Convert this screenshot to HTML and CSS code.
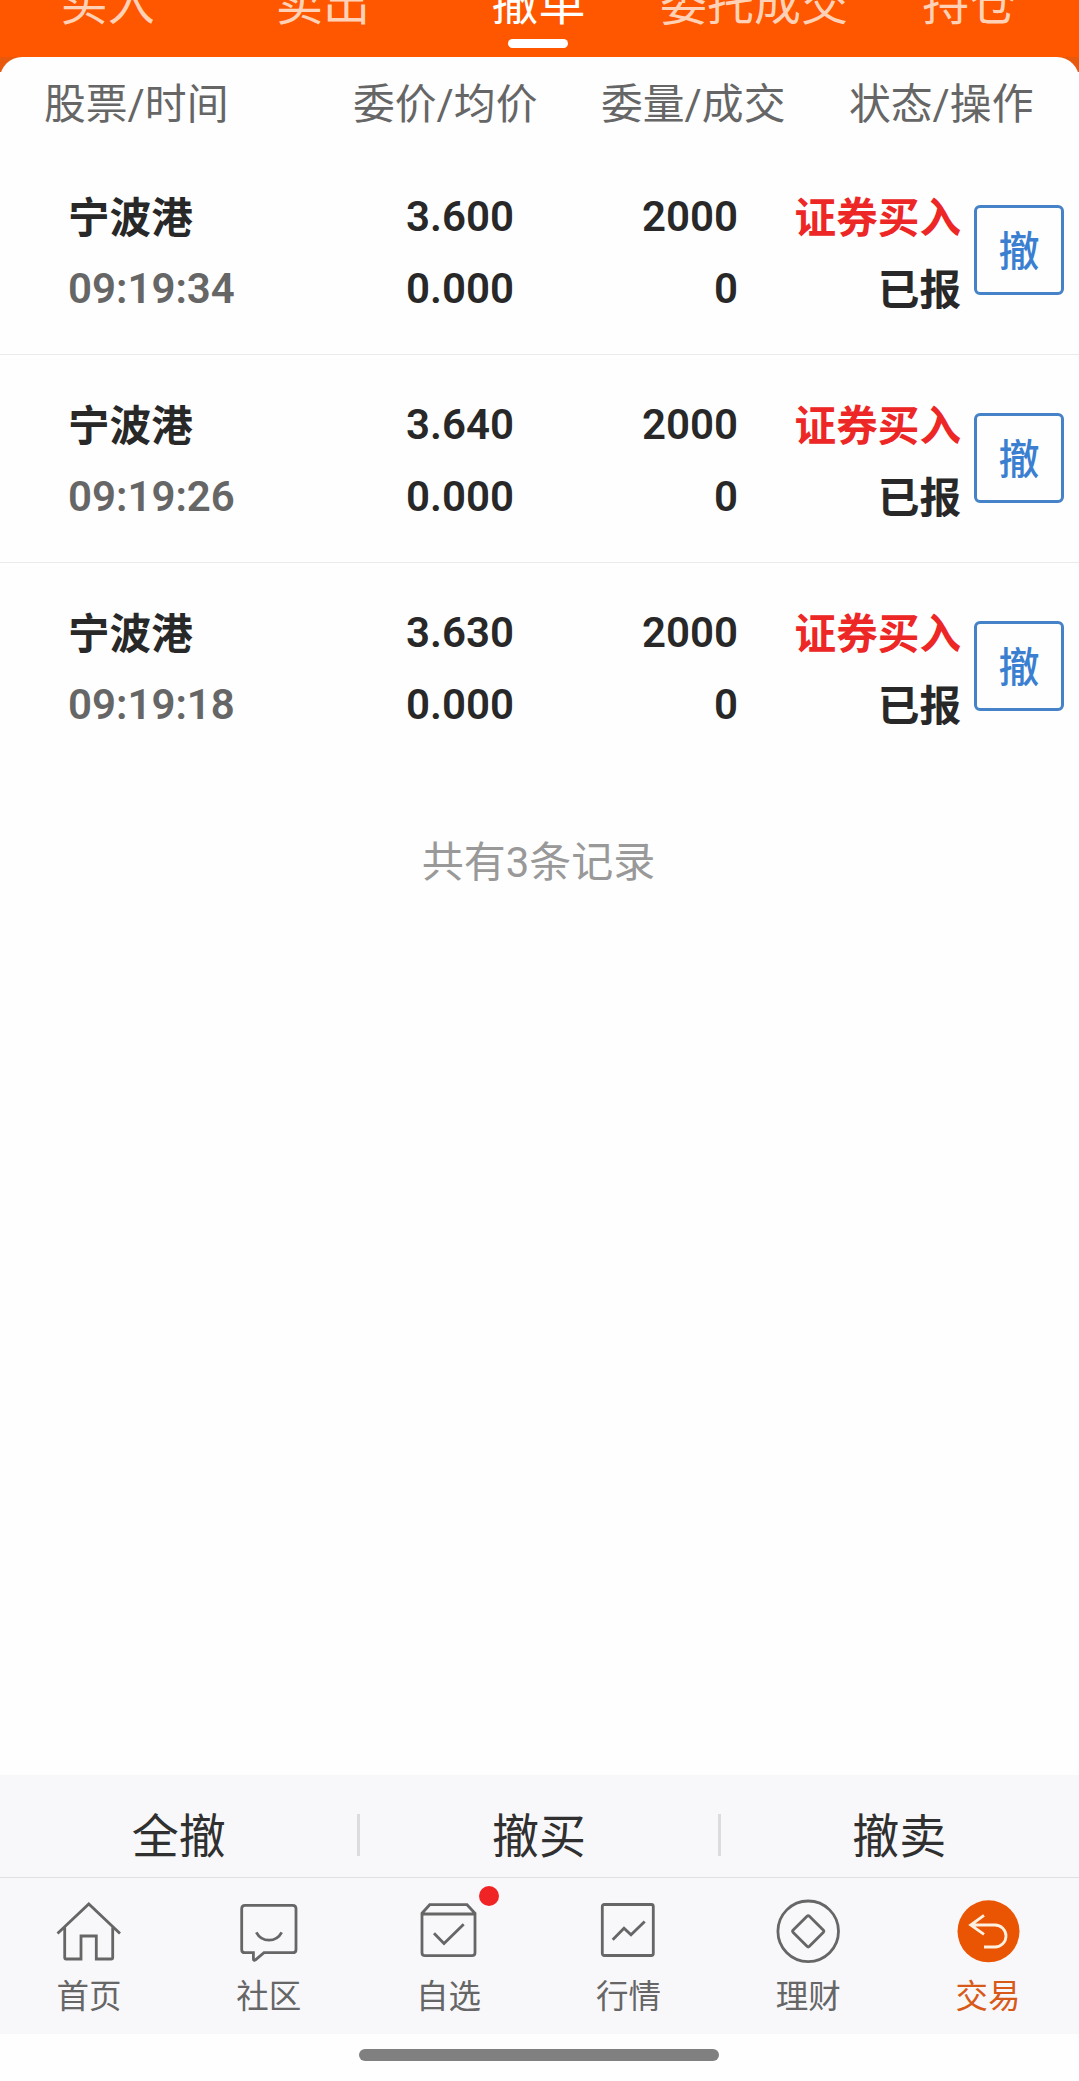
FILE: index.html
```html
<!DOCTYPE html>
<html lang="zh-CN">
<head>
<meta charset="utf-8">
<title>撤单</title>
<link rel="stylesheet" href="styles.css">
</head>
<body>
<div class="screen">
  <nav class="tabs">
    <span class="tab">买入</span>
    <span class="tab">卖出</span>
    <span class="tab tab-active">撤单</span>
    <span class="tab">委托成交</span>
    <span class="tab">持仓</span>
  </nav>
  <div class="card-edge">
  <main class="card">
    <div class="columns">
      <span class="column">股票/时间</span>
      <span class="column">委价/均价</span>
      <span class="column">委量/成交</span>
      <span class="column">状态/操作</span>
    </div>
    <section class="order">
      <div class="cell cell-name"><div class="line cjk">宁波港</div><div class="line time">09:19:34</div></div>
      <div class="cell"><div class="line">3.600</div><div class="line">0.000</div></div>
      <div class="cell"><div class="line">2000</div><div class="line">0</div></div>
      <div class="cell"><div class="line cjk buy">证券买入</div><div class="line cjk">已报</div></div>
      <button class="revoke">撤</button>
    </section>
    <section class="order">
      <div class="cell cell-name"><div class="line cjk">宁波港</div><div class="line time">09:19:26</div></div>
      <div class="cell"><div class="line">3.640</div><div class="line">0.000</div></div>
      <div class="cell"><div class="line">2000</div><div class="line">0</div></div>
      <div class="cell"><div class="line cjk buy">证券买入</div><div class="line cjk">已报</div></div>
      <button class="revoke">撤</button>
    </section>
    <section class="order order-last">
      <div class="cell cell-name"><div class="line cjk">宁波港</div><div class="line time">09:19:18</div></div>
      <div class="cell"><div class="line">3.630</div><div class="line">0.000</div></div>
      <div class="cell"><div class="line">2000</div><div class="line">0</div></div>
      <div class="cell"><div class="line cjk buy">证券买入</div><div class="line cjk">已报</div></div>
      <button class="revoke">撤</button>
    </section>
    <p class="total">共有3条记录</p>
  </main>
  </div>
  <div class="actions">
    <span class="action">全撤</span>
    <i class="divider"></i>
    <span class="action">撤买</span>
    <i class="divider"></i>
    <span class="action">撤卖</span>
  </div>
  <nav class="nav">
    <a class="item">
      <svg class="icon" viewBox="0 0 72 72"><path d="M3.5 37.5 34.8 8 66 37.5M10.7 31.5V61.5Q10.7 63 12.2 63H27V40H42.3V63H57.2Q58.7 63 58.7 61.5V31.5"/></svg>
      <span class="label">首页</span>
    </a>
    <a class="item">
      <svg class="icon" viewBox="0 0 72 72"><path d="M11 9.3H58.7Q62 9.3 62 12.6V53.4Q62 56.7 58.7 56.7H30L21.5 63.9Q19.5 65.2 19.4 63V56.7H11Q7.7 56.7 7.7 53.4V12.6Q7.7 9.3 11 9.3ZM22.3 36.3C28 46.8 42 46.8 47.7 36.3"/></svg>
      <span class="label">社区</span>
    </a>
    <a class="item">
      <svg class="icon" viewBox="0 0 72 72"><path d="M8 17.3 15.7 8.7H53L61 17.3V56.7Q61 59.7 58 59.7H11Q8 59.7 8 56.7ZM8 18H61M20 37.3 30 47.5 49.7 28.3"/></svg>
      <span class="label">自选</span>
      <b class="dot"></b>
    </a>
    <a class="item">
      <svg class="icon" viewBox="0 0 72 72"><rect x="9.3" y="8.5" width="51" height="51" rx="2"/><path d="M19.7 43.7 31 32.2 38 38.8 51.7 25.5"/></svg>
      <span class="label">行情</span>
    </a>
    <a class="item">
      <svg class="icon" viewBox="0 0 72 72"><circle cx="35.2" cy="35.3" r="30.3"/><path d="M34 20.3Q35.2 19.1 36.4 20.3L50.2 34.1Q51.4 35.3 50.2 36.5L36.4 50.3Q35.2 51.5 34 50.3L20.2 36.5Q19 35.3 20.2 34.1Z"/></svg>
      <span class="label">理财</span>
    </a>
    <a class="item item-active">
      <svg class="icon" viewBox="0 0 72 72"><circle class="disc" cx="35.5" cy="35.3" r="31"/><path class="arrow" d="M31 19.3 17.7 29 31 38.3M17.7 29H42A11 11 0 0 1 42 51H31"/></svg>
      <span class="label">交易</span>
    </a>
  </nav>
  <footer class="gesture"><i class="pill"></i></footer>
</div>
</body>
</html>
```
FILE: styles.css
```css
* { box-sizing: border-box; }

body {
  margin: 0;
  background: #fefefe;
  font-family: Roboto, "Noto Sans CJK SC", sans-serif;
  color: #282828;
}

.screen {
  width: 1079px;
  height: 2081px;
  display: flex;
  flex-direction: column;
  overflow: hidden;
}

.tabs {
  height: 57px;
  flex: none;
  display: grid;
  grid-template-columns: repeat(5, 1fr);
  padding-right: 2px;
  background: #ff5600;
  overflow: hidden;
}

.tab {
  display: flex;
  flex-direction: column;
  align-items: center;
  margin-top: -26px;
  font-size: 47px;
  font-weight: 400;
  line-height: 60px;
  color: #ffd2b8;
}

.tab-active { color: #fff; }

.tab-active::after {
  content: "";
  width: 60px;
  height: 9px;
  margin-top: 5px;
  border-radius: 5px;
  background: #fff;
}

.card-edge {
  flex: 1;
  background: linear-gradient(#e8590c 15px, #fefefe 15px);
}

.card {
  height: 100%;
  border-radius: 22px 22px 0 0;
  background: #fefefe;
}

.columns {
  height: 90px;
  padding: 18px 0 0 44px;
  display: grid;
  grid-template-columns: 309px 248px 248px 1fr;
}

.column {
  font-size: 41.8px;
  font-weight: 400;
  line-height: 60px;
  color: #666;
}

.order {
  height: 208px;
  padding: 34px 15px 0 68px;
  display: grid;
  grid-template-columns: 200px 246px 224px 223px 90px;
  justify-content: start;
  border-bottom: 1px solid #ebebeb;
}

.order-last { border-bottom-color: transparent; }

.cell {
  text-align: right;
  white-space: nowrap;
}

.cell-name { text-align: left; }

.line {
  height: 72px;
  font-size: 42px;
  font-weight: 600;
  line-height: 72px;
}

.cjk {
  padding-top: 2px;
  font-size: 41.6px;
  font-weight: 700;
}

.time { color: #666; }

.buy { color: #ed2626; }

.revoke {
  width: 90px;
  height: 90px;
  margin: 24px 0 0 13px;
  padding: 4px 0 0;
  border: 3px solid #4682c8;
  border-radius: 6px;
  background: transparent;
  font: 500 41px/80px Roboto, "Noto Sans CJK SC", sans-serif;
  color: #3a7fd0;
}

.total {
  margin: 60px 2px 0 0;
  font-size: 42px;
  font-weight: 400;
  line-height: 64px;
  text-align: center;
  color: #999;
}

.actions {
  height: 102px;
  flex: none;
  display: flex;
  align-items: center;
  padding: 18px 1px 0 0;
  background: #f8f8fb;
}

.action {
  flex: 1;
  padding-top: 4px;
  font-size: 47px;
  font-weight: 400;
  line-height: 60px;
  text-align: center;
  color: #303030;
}

.divider {
  width: 3px;
  height: 42px;
  background: #dcdcdf;
}

.nav {
  height: 157px;
  flex: none;
  display: grid;
  grid-template-columns: repeat(6, 1fr);
  border-top: 1px solid #e0e0e3;
  background: #f8f8fb;
}

.item {
  position: relative;
  display: flex;
  flex-direction: column;
  align-items: center;
  padding-top: 18px;
  color: #666;
}

.item-active { color: #d85a18; }

.icon {
  width: 72px;
  height: 72px;
  fill: none;
  stroke: #666;
  stroke-width: 2.8;
}

.icon .disc { fill: #ea5504; stroke: none; }

.icon .arrow { stroke: #fff0e0; }

.label {
  margin: 8px 2px 0 0;
  font-size: 32.5px;
  font-weight: 400;
  line-height: 42px;
}

.dot {
  position: absolute;
  top: 8px;
  left: 119px;
  width: 20px;
  height: 20px;
  border-radius: 50%;
  background: #f02424;
}

.gesture {
  height: 47px;
  flex: none;
  padding-top: 15px;
  background: #fefefe;
}

.pill {
  display: block;
  width: 360px;
  height: 12px;
  margin: 0 auto 0 359px;
  border-radius: 6px;
  background: #808080;
}
```
